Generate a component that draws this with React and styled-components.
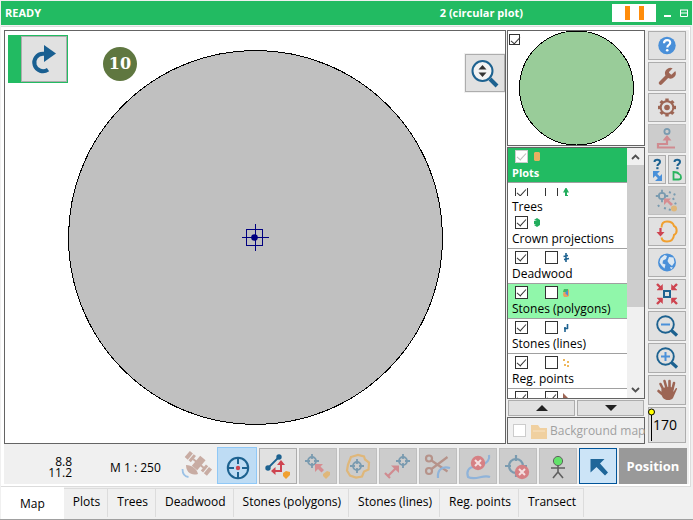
import React from "react";
import styled, { createGlobalStyle, css } from "styled-components";

const green = "#22bb62";
const navy = "#1d6290";
const brown = "#9d6554";
const red = "#ce4450";
const sky = "#4a90d9";
const amber = "#f0a030";

const GlobalStyle = createGlobalStyle`
  * { box-sizing: border-box; }
  body { margin: 0; background: #f0f0f0; }
  button, input { font: inherit; margin: 0; padding: 0; }
  svg { display: block; }
`;

const Page = styled.div`
  min-height: 100vh;
  display: flex;
  flex-direction: column;
  padding: 1px 1px 0;
  background: #f0f0f0;
  border-bottom: 1px solid #a0a0a0;
  color: #000;
  font: 12px/16px "Open Sans", "Noto Sans", sans-serif;
`;

const Header = styled.header`
  display: flex;
  align-items: center;
  height: 24px;
  padding: 0 4px;
  background: ${green};
  color: #fff;
  font-size: 11px;
  font-weight: 700;
`;
const Status = styled.span`
  flex: 1;
`;
const PlotTitle = styled.h1`
  margin: 0 89px 0 0;
  font: inherit;
`;
const Gauge = styled.span`
  display: flex;
  justify-content: center;
  gap: 9px;
  width: 44px;
  height: 18px;
  padding: 2px 0;
  background: #fff;
`;
const GaugeBar = styled.span`
  width: 5px;
  background: #ff8c0a;
`;
const WindowButton = styled.button`
  width: 8px;
  height: 8px;
  margin-left: 8px;
  border: 0;
  background: none;
`;

const Workspace = styled.main`
  flex: 1;
  margin-top: 1px;
  padding: 3px 0 0 3px;
  margin-right: 1px;
  border: 1px solid #dcdcdc;
  border-left: 0;
  background: #fff;
`;
const Panels = styled.div`
  display: flex;
  gap: 1px;
  background: #f0f0f0;
  margin-right: 1px;
`;
const MapPanel = styled.section`
  position: relative;
  flex: 1;
  min-width: 0;
  border: 1px solid #646464;
  background: #fff;
`;
const MapDrawing = styled.svg`
  width: 100%;
  height: 100%;
`;
const UndoFrame = styled.div`
  position: absolute;
  left: 3px;
  top: 4px;
  padding: 1px 1px 1px 13px;
  background: ${green};
`;
const ZoomFrame = styled.div`
  position: absolute;
  right: 0;
  top: 22px;
  padding: 1px 0 1px 1px;
  background: #f0f0f0;
`;
const Badge = styled.span`
  position: absolute;
  left: 98px;
  top: 16px;
  width: 34px;
  height: 34px;
  border-radius: 50%;
  background: #5f7740;
  color: #fff;
  font: 700 16px/34px "DejaVu Serif", serif;
  text-align: center;
`;

const tones = {
  normal: css`
    border-color: #adadad;
    background: #e1e1e1;
  `,
  off: css`
    border-color: #bfbfbf;
    background: #cccccc;
  `,
  hover: css`
    border-color: #90c8f6;
    background: #bedcf4;
  `,
  active: css`
    border-color: #005499;
    background: #cce4f7;
  `,
  flat: css`
    border-color: transparent;
    background: none;
  `,
};
const IconButton = styled.button`
  display: flex;
  align-items: center;
  justify-content: center;
  flex: none;
  width: ${(p) => p.$w || 38}px;
  height: ${(p) => p.$h || 29}px;
  border: 1px solid;
  ${(p) => tones[p.$tone || "normal"]}
`;

const SidePanel = styled.aside`
  display: flex;
  flex-direction: column;
  width: 138px;
  flex: none;
`;
const Preview = styled.div`
  position: relative;
  height: 116px;
  border: 1px solid #646464;
  background: #fff;
`;
const PreviewCheck = styled.div`
  position: absolute;
  left: 1px;
  top: 3px;
`;
const Check = styled.input.attrs({ type: "checkbox" })`
  appearance: none;
  display: block;
  flex: none;
  position: relative;
  width: ${(p) => p.$size || 13}px;
  height: ${(p) => p.$size || 13}px;
  border: 1px solid ${(p) => (p.$faint ? "#cccccc" : "#333")};
  background: #fff;
  &:checked::after {
    content: "";
    position: absolute;
    left: 3px;
    top: 0;
    width: 4px;
    height: 8px;
    border: solid ${(p) => (p.$faint ? "#bbb" : "#333")};
    border-width: 0 1px 1px 0;
    transform: rotate(42deg);
  }
`;

const LayerBox = styled.div`
  display: flex;
  height: 252px;
  margin-top: 1px;
  border: 1px solid #646464;
  background: #fff;
`;
const Layers = styled.ul`
  flex: 1;
  min-width: 0;
  margin: 0;
  padding: 0;
  list-style: none;
  overflow: hidden;
`;
const Layer = styled.li`
  height: ${(p) => (p.$cut ? 31 : 35)}px;
  padding: ${(p) => (p.$cut ? 5 : 2)}px 0 0 4px;
  border-bottom: 1px solid ${(p) => (p.$line ? "#a0a0a0" : "transparent")};
  background: ${(p) => p.$bg || "#fff"};
  background-clip: padding-box;
  color: ${(p) => (p.$bold ? "#fff" : "#000")};
  font-size: ${(p) => (p.$bold ? 11 : 12)}px;
  font-weight: ${(p) => (p.$bold ? 700 : 400)};
`;
const Toggles = styled.div`
  display: grid;
  grid-template-columns: ${(p) => (p.$single ? "17px 10px" : "30px 16px 10px")};
  align-items: center;
  align-content: center;
  height: ${(p) => (p.$cut ? 8 : 13)}px;
  margin: 0 0 ${(p) => (p.$cut ? 3 : 2)}px 3px;
  overflow: hidden;
`;
const LayerName = styled.span`
  display: block;
  white-space: nowrap;
`;
const ScrollBar = styled.div`
  display: flex;
  flex-direction: column;
  align-items: center;
  width: 17px;
  background: #f0f0f0;
`;
const ScrollButton = styled.button`
  display: grid;
  place-items: center;
  width: 17px;
  height: 17px;
  border: 0;
  background: none;
`;
const Thumb = styled.div`
  align-self: stretch;
  height: 142px;
  margin-bottom: auto;
  background: #cdcdcd;
`;
const MoveButtons = styled.div`
  display: flex;
  gap: 2px;
  margin: 1px 1px 0;
`;
const MoveButton = styled(IconButton)`
  flex: 1;
  height: 16px;
`;
const BackgroundMap = styled.label`
  display: flex;
  align-items: center;
  flex: 1;
  margin-top: 1px;
  padding-left: 5px;
  border: 1px solid #646464;
  color: #a0a0a0;
  white-space: nowrap;
`;
const FolderSlot = styled.span`
  margin: 3px 3px 0 5px;
`;

const Tools = styled.nav`
  display: flex;
  flex-direction: column;
  gap: 2px;
  width: 38px;
  margin: 1px 3px 1px 2px;
  flex: none;
`;
const Pair = styled.div`
  display: flex;
  justify-content: space-between;
`;
const ScaleButton = styled(IconButton)`
  position: relative;
  justify-content: flex-end;
  padding-right: 8px;
  font-size: 14px;
`;
const Pin = styled.svg`
  position: absolute;
  left: -1px;
  top: 0;
`;

const Bottom = styled.footer`
  display: flex;
  align-items: flex-end;
  gap: 2px;
  height: 40px;
  margin-right: 1px;
  padding-right: 2px;
  background: #f0f0f0;
`;
const Coordinates = styled.div`
  width: 68px;
  padding-bottom: 6px;
  line-height: 11px;
  text-align: right;
`;
const Scale = styled.div`
  flex: 1;
  padding: 0 0 8px 36px;
  white-space: nowrap;
`;
const Actions = styled.div`
  display: flex;
  gap: 2px;
  align-items: flex-end;
`;
const PositionButton = styled.button`
  width: 68px;
  height: 36px;
  border: 0;
  background: #999;
  color: #fff;
  font-size: 13px;
  font-weight: 700;
`;

const Tabs = styled.div`
  display: flex;
  align-items: flex-start;
`;
const Tab = styled.button`
  height: ${(p) => (p.$on ? 32 : 29)}px;
  margin-top: ${(p) => (p.$on ? 0 : 1)}px;
  padding: ${(p) => (p.$on ? "2px 19px 0" : "0 7px 2px 9px")};
  border: 0 solid #dcdcdc;
  border-width: ${(p) => (p.$on ? "0" : "1px 1px 0 0")};
  background: ${(p) => (p.$on ? "#fff" : "#f0f0f0")};
  white-space: nowrap;
`;

const Svg = ({ w = 36, h = 27, children, ...rest }) => (
  <svg width={w} height={h} viewBox={`0 0 ${w} ${h}`} fill="none" aria-hidden="true" {...rest}>
    {children}
  </svg>
);

const Help = () => (
  <Svg>
    <circle cx="18" cy="13.5" r="8.7" fill={sky} />
    <path d="M15 11.200c0-4 6.200-4 6.200-.5 0 2.300-2.900 2.300-2.900 4.800" stroke="#fff" strokeWidth="2.200" />
    <circle cx="18.200" cy="18.300" r="1.300" fill="#fff" />
  </Svg>
);
const WrenchIcon = () => (
  <Svg>
    <g transform="translate(7 3) scale(.9)">
      <path
        fill={brown}
        d="M14.700 6.300a1 1 0 0 0 0 1.400l1.600 1.600a1 1 0 0 0 1.400 0l3.770-3.770a6 6 0 0 1-7.940 7.940l-6.910 6.910a2.120 2.120 0 0 1-3-3l6.910-6.910a6 6 0 0 1 7.940-7.940z"
      />
    </g>
  </Svg>
);
const Gear = () => (
  <Svg>
    <g transform="translate(18 13.500)" stroke={brown}>
      <circle r="6.300" strokeWidth="2" />
      <circle r="2.800" fill={brown} stroke="none" />
      {[0, 45, 90, 135, 180, 225, 270, 315].map((a) => (
        <path key={a} d="M0-6.500v-2.500" strokeWidth="3.400" transform={`rotate(${a})`} />
      ))}
    </g>
  </Svg>
);
const StepUp = () => (
  <Svg>
    <circle cx="18" cy="6.500" r="2.600" stroke="#7a9bb0" strokeWidth="1.800" />
    <path d="M18 12v7H9v3.500h17" stroke="#d08b90" strokeWidth="2.200" />
    <path d="M13.500 15.500 18 10l4.500 5.500z" fill="#d08b90" />
  </Svg>
);
const QuestionMark = () => (
  <>
    <path d="M5.500 6c0-3 5.500-3 5.500 0 0 2-2.600 2-2.600 4" stroke={navy} strokeWidth="2" />
    <path d="M7.300 11.200h2.200v2H7.300z" fill={navy} />
  </>
);
const AskMove = () => (
  <Svg w={16}>
    <QuestionMark />
    <path d="M4 15h7l-7 7zM13 25H6l7-7z" fill={sky} />
    <path d="m6 17.500 5.500 5.500" stroke={sky} strokeWidth="2.500" />
  </Svg>
);
const AskShape = () => (
  <Svg w={16}>
    <QuestionMark />
    <path d="M4.500 16v7.500h5c3.500 0 3-4.500.5-5.500-1.500-2-3.500-2-5.500-2z" stroke="#2bb45f" strokeWidth="1.800" />
  </Svg>
);
const Sight = ({ x, y, r = 4, c = "#7a9bb0" }) => (
  <g transform={`translate(${x} ${y})`} stroke={c} strokeWidth="1.800">
    <circle r={r} />
    <path d={`M0-${r + 3}V-2M0 2V${r + 3}M-${r + 3} 0H-2M2 0H${r + 3}`} />
  </g>
);
const Scatter = () => (
  <Svg>
    <Sight x={13} y={9} r={3.2} />
    <path d="M20 5l9 4M24 11l4 9M9 18l3 4M15 21l7 2" stroke="#7a9bb0" strokeWidth="2" strokeDasharray="2 3" />
    <path d="M15 11.500h7l-2 2 4 3.500-2 2-4-4-3 3z" fill="#d68d91" />
    <circle cx="25" cy="21.500" r="3" fill="#dfb77a" />
  </Svg>
);
const PlotIn = () => (
  <Svg>
    <path
      d="M12.500 9.500c0-3.500 2-6 5.500-6s6 .5 7 4.500c3 1 4 7 0 9-.5 5-3.500 6.500-7 6.500-3 0-5-1-5.500-4"
      stroke={amber}
      strokeWidth="2"
    />
    <path d="M11.500 10v5" stroke={red} strokeWidth="2.200" />
    <path d="M7.500 14h8l-4 4.500z" fill={red} />
  </Svg>
);
const Globe = () => (
  <Svg>
    <circle cx="18" cy="13.500" r="9" fill={sky} />
    <path
      d="m11.500 9.500 4-3.500 2.500 1-1 3-3 1.500-.5 3 3 1-1 4-3-3-2-3zM20 8l4.500.500 1 5-2.500 3.500-3-2.500-1.500-2.500zM21 18l3 .5-2 2z"
      fill="#dce8f2"
    />
  </Svg>
);
const Collapse = () => (
  <Svg h={28}>
    <rect x="15" y="11" width="6" height="6" stroke={navy} strokeWidth="2" />
    <g fill={red} stroke={red}>
      {["", "translate(36 0) scale(-1 1)", "translate(0 28) scale(1 -1)", "translate(36 28) scale(-1 -1)"].map((t) => (
        <g key={t} transform={t || undefined}>
          <path d="M13.500 4.500v5.500H8z" strokeWidth=".5" />
          <path d="m8 4 5 5" strokeWidth="2.400" />
        </g>
      ))}
    </g>
  </Svg>
);
const Magnifier = ({ plus }) => (
  <Svg h={28}>
    <circle cx="16.500" cy="12.500" r="8.300" stroke={navy} strokeWidth="1.900" />
    <path d="m22.500 18.500 5.500 5" stroke={navy} strokeWidth="3.200" />
    <path d={plus ? "M12 12.500h9M16.500 8v9" : "M12 12.500h9"} stroke={sky} strokeWidth="2" />
  </Svg>
);
const Hand = () => (
  <Svg h={28}>
    <g stroke={brown} strokeLinecap="round" strokeWidth="2.600">
      <path d="m14.500 14-3-6M17.500 12l-2-7M20.500 12V5M23.500 13l1.500-6M13 18l-3.500-3" />
    </g>
    <path d="M12.500 13c2-2 9-3 12-1v4l2-3.500c1-1 2-.5 1.500.500L24 22c-2 3-8 2.500-10 0-1.500-2-2-5-1.500-9z" fill={brown} />
  </Svg>
);

const Satellite = () => (
  <Svg h={34}>
    <g transform="translate(20 14) rotate(40)" fill="#c8aca3">
      <path d="M-14-4h4v8h-4zM-9-4h3v8h-3zM7-4h3v8H7zM11-4h4v8h-4zM-6-1H7v2H-6z" />
      <path d="M-3-7h7V6h-7z" />
    </g>
    <path d="M8 16c0 7 5 11 12 9-1-5-6-9-12-9z" fill="#c8aca3" />
    <path d="M4.500 20c0 5 2 7.500 6 8" stroke="#9cc2e6" strokeWidth="1.800" />
  </Svg>
);
const Target = () => (
  <Svg h={34} w={38}>
    <g stroke={navy} strokeWidth="2">
      <circle cx="20" cy="19" r="10.200" />
      <path d="M20 9v6M20 23v6M10 19h6M24 19h6" />
    </g>
    <circle cx="20" cy="19" r="2.200" fill={red} />
  </Svg>
);
const MoveLine = () => (
  <Svg h={34}>
    <path d="M8 19 19 8" stroke={navy} strokeWidth="1.800" />
    <circle cx="8" cy="19" r="2.700" fill={navy} />
    <circle cx="19" cy="8" r="2.700" fill={navy} />
    <path d="M21 14v8h-7" stroke={red} strokeWidth="2" />
    <path d="m17 16 4-5 4 5zM15.500 18v8L11 22z" fill={red} />
    <path d="m23 24 3-2 4 1v3l-4 4-3-3z" fill={amber} />
  </Svg>
);
const PointFrom = () => (
  <Svg h={34}>
    <Sight x={12} y={12} />
    <path d="M15 15h8l-2.500 2.500 3.500 3.500-2.500 2.500-3.500-3.500L15 23z" fill="#d68d91" />
    <path d="m23 25 4-3 3 1v3l-4 4-3-3z" fill="#dfb77a" />
  </Svg>
);
const PlotCentre = () => (
  <Svg h={34}>
    <path d="M11 8l7-2 6 1.500 1 3 4 3-.5 7-4.500 2-2 5-6 1-6-2-3-5 1-6z" stroke="#dfb77a" strokeWidth="2.200" />
    <Sight x={17} y={17} />
  </Svg>
);
const PointTo = () => (
  <Svg h={34}>
    <Sight x={23} y={12} />
    <path d="m8 27 8-8M5 24l5 5" stroke="#d08b90" strokeWidth="2.200" />
    <path d="M11 16.500h8V24z" fill="#d08b90" />
  </Svg>
);
const Scissors = () => (
  <Svg h={34}>
    <g stroke="#b6938a" strokeWidth="2.200">
      <circle cx="9" cy="9.500" r="3" />
      <circle cx="9" cy="22" r="3" />
      <path d="m11.500 11.500 16 11M11.500 20l16-12" />
    </g>
    <path d="M18 29c-1-9 5-12 12-10" stroke="#8fb3d9" strokeWidth="2.200" />
  </Svg>
);
const Cross = ({ x, y }) => (
  <g transform={`translate(${x} ${y})`}>
    <circle r="7.200" fill="#d68084" />
    <path d="m-3-3 6 6m0-6-6 6" stroke="#fff" strokeOpacity=".75" strokeWidth="2" />
  </g>
);
const RemoveLine = () => (
  <Svg h={34}>
    <path d="M29 6c1 5-2 7-5 9s-5 3-10 3-8 4-6 10c8 4 15-3 22 0" stroke="#8fb3d9" strokeWidth="2.200" />
    <Cross x={18} y={14} />
  </Svg>
);
const RemovePoint = () => (
  <Svg h={34}>
    <g stroke="#7a9bb0" strokeWidth="2.200">
      <circle cx="16" cy="17" r="7" />
      <path d="M16 6v6M5 17h6M16 22v6M21 17h6" />
    </g>
    <Cross x={22} y={23} />
  </Svg>
);
const Person = () => (
  <Svg h={34}>
    <path d="M18 16v8M11 19h14M18 23l-5 6M18 23l5 6" stroke="#606060" strokeWidth="1.600" />
    <circle cx="18" cy="12" r="4.600" fill="#62e26a" stroke="#606060" />
  </Svg>
);
const Pointer = () => (
  <Svg h={34}>
    <path d="M10.500 10h14l-4.500 4.500 8 9-3 3-8.500-8.500-6 5.500z" fill="#1f6699" />
  </Svg>
);
const Redo = () => (
  <Svg w={30} h={34}>
    <path d="M16 11.800h-2a8.700 8.700 0 1 0 5 15.800" stroke="#195f91" strokeWidth="4" />
    <path d="M15 3v17l12-8.500z" fill="#195f91" />
  </Svg>
);
const FitIcon = () => (
  <Svg w={32} h={34}>
    <circle cx="13.500" cy="15" r="10" fill="#f3f3f3" stroke={navy} strokeWidth="2" />
    <path d="m21 23 7 7" stroke={navy} strokeWidth="4" />
    <path d="M9.500 13.500h8l-4-4.500zM9.500 16.500h8l-4 4.500z" fill="#333" />
  </Svg>
);
const Folder = () => (
  <Svg w={16} h={14}>
    <path d="M0 0h7l2 3h7v11H0z" fill="#f0d0a0" />
    <path d="M2 6h12" stroke="#f8e3c5" />
  </Svg>
);
const glyphs = {
  plot: <path d="M3 0h4l1 1v7L7 9H3L2 8V1z" fill="#e8af60" />,
  tree: <path d="m5 0 3 5.500H6V8h1v1H4V8V5.500H2z" fill="#22ad5d" />,
  crown: <path d="m2 2 3-2 3 2v5L5 9 2 7l2-1H2V3h3z" fill="#22ad5d" />,
  deadwood: <path d="M5 0v9M2.500 3.500 7 2.500M3 6.500l5-1" stroke={navy} strokeWidth="1.600" />,
  polygon: (
    <>
      <path d="M3 1h4l1 1v6L6 9H3L2 7z" fill="#e8a05e" />
      <path d="M3 1h4v3H2z" fill="#40b864" />
      <path d="m7 2-3 3 3 3z" fill={sky} />
    </>
  ),
  line: <path d="M4 4v5M6.500 1v5M3 5.500h4" stroke={navy} strokeWidth="1.600" />,
  points: <path d="M2 1h2v2H2zM6 3h2v2H6zM3 6h2v2H3zM6 7h2v2H6z" fill="#eeb85c" />,
  area: <path d="m2 0 5 5v4H2z" fill={brown} />,
};

const layers = [
  { name: "Plots", icon: "plot", bg: green, bold: true, single: true, line: true, faint: true },
  { name: "Trees", icon: "tree", cut: true },
  { name: "Crown projections", icon: "crown", single: true, line: true },
  { name: "Deadwood", icon: "deadwood", line: true },
  { name: "Stones (polygons)", icon: "polygon", line: true, bg: "#90f7aa" },
  { name: "Stones (lines)", icon: "line", line: true },
  { name: "Reg. points", icon: "points", line: true },
  { name: "", icon: "area", second: true },
];

const actions = [
  ["GPS", Satellite, "flat"],
  ["Target", Target, "hover"],
  ["Move line", MoveLine, "normal"],
  ["Point from plot", PointFrom, "off"],
  ["Plot centre", PlotCentre, "off"],
  ["Point to", PointTo, "off"],
  ["Cut", Scissors, "off"],
  ["Remove line", RemoveLine, "off"],
  ["Remove point", RemovePoint, "off"],
  ["Person", Person, "off"],
  ["Select", Pointer, "active"],
];

const Tool = ({ label, icon: Icon, ...rest }) => (
  <IconButton type="button" aria-label={label} {...rest}>
    <Icon />
  </IconButton>
);

export default function App() {
  return (
    <Page>
      <GlobalStyle />
      <Header>
        <Status>READY</Status>
        <PlotTitle>2 (circular plot)</PlotTitle>
        <Gauge>
          <GaugeBar />
          <GaugeBar />
        </Gauge>
        <WindowButton aria-label="Minimize">
          <Svg w={8} h={8}>
            <path d="M0 6h7v2H0z" fill="#fff" />
          </Svg>
        </WindowButton>
        <WindowButton aria-label="Restore">
          <Svg w={8} h={8}>
            <path d="M.5 1v6.500h7V1M0 1h8M0 4h8" stroke="#fff" />
          </Svg>
        </WindowButton>
      </Header>

      <Workspace>
        <Panels>
          <MapPanel>
            <MapDrawing viewBox="0 0 500 412" preserveAspectRatio="xMidYMid meet">
              <circle cx="250.500" cy="206.500" r="187" fill="#c0c0c0" stroke="#000" shapeRendering="crispEdges" />
              <g stroke="#000080" shapeRendering="crispEdges" fill="none">
                <rect x="241.500" y="198.500" width="16" height="16" />
                <path d="M237 206.500h27M250.500 193v27" />
              </g>
              <circle cx="249.500" cy="206.500" r="3.300" fill="#000080" />
            </MapDrawing>
            <UndoFrame>
              <Tool label="Redo" icon={Redo} $w={46} $h={46} />
            </UndoFrame>
            <Badge>10</Badge>
            <ZoomFrame>
              <Tool label="Zoom to fit" icon={FitIcon} $w={40} $h={38} />
            </ZoomFrame>
          </MapPanel>

          <SidePanel>
            <Preview>
              <Svg w={136} h={114}>
                <circle cx="68.500" cy="57" r="57" fill="#99cc99" stroke="#000" shapeRendering="crispEdges" />
              </Svg>
              <PreviewCheck>
                <Check $size={11} defaultChecked aria-label="Preview" />
              </PreviewCheck>
            </Preview>
            <LayerBox>
              <Layers>
                {layers.map((l) => (
                  <Layer key={l.icon} $bg={l.bg} $bold={l.bold} $line={l.line} $cut={l.cut}>
                    <Toggles $single={l.single} $cut={l.cut}>
                      <Check defaultChecked $faint={l.faint} aria-label={`${l.name || l.icon} visible`} />
                      {!l.single && <Check defaultChecked={l.second} aria-label={`${l.name || l.icon} labels`} />}
                      <Svg w={10} h={10}>
                        {glyphs[l.icon]}
                      </Svg>
                    </Toggles>
                    <LayerName>{l.name}</LayerName>
                  </Layer>
                ))}
              </Layers>
              <ScrollBar>
                <ScrollButton aria-label="Scroll up">
                  <Svg w={9} h={6}>
                    <path d="m1 5 3.500-3.500L8 5" stroke="#505050" strokeWidth="1.800" />
                  </Svg>
                </ScrollButton>
                <Thumb />
                <ScrollButton aria-label="Scroll down">
                  <Svg w={9} h={6}>
                    <path d="m1 1 3.500 3.500L8 1" stroke="#505050" strokeWidth="1.800" />
                  </Svg>
                </ScrollButton>
              </ScrollBar>
            </LayerBox>
            <MoveButtons>
              <MoveButton aria-label="Move up">
                <Svg w={12} h={6}>
                  <path d="m0 6 6-6 6 6z" fill="#222" />
                </Svg>
              </MoveButton>
              <MoveButton aria-label="Move down">
                <Svg w={12} h={6}>
                  <path d="m0 0 6 6 6-6z" fill="#222" />
                </Svg>
              </MoveButton>
            </MoveButtons>
            <BackgroundMap>
              <Check $faint disabled />
              <FolderSlot>
                <Folder />
              </FolderSlot>
              Background map
            </BackgroundMap>
          </SidePanel>

          <Tools>
            <Tool label="Help" icon={Help} />
            <Tool label="Settings" icon={WrenchIcon} />
            <Tool label="Options" icon={Gear} />
            <Tool label="Step up" icon={StepUp} $tone="off" />
            <Pair>
              <Tool label="Query position" icon={AskMove} $w={18} />
              <Tool label="Query shape" icon={AskShape} $w={18} />
            </Pair>
            <Tool label="Scatter" icon={Scatter} $tone="off" />
            <Tool label="Go to plot" icon={PlotIn} />
            <Tool label="Whole world" icon={Globe} />
            <Tool label="Centre" icon={Collapse} $h={30} />
            <Tool label="Zoom out" icon={Magnifier} $h={30} />
            <IconButton type="button" aria-label="Zoom in" $h={30}>
              <Magnifier plus />
            </IconButton>
            <Tool label="Pan" icon={Hand} $h={30} />
            <ScaleButton $h={36}>
              <Pin width="8" height="34" viewBox="0 0 8 34" aria-hidden="true">
                <path d="M3.500 6v27" stroke="#000" />
                <circle cx="3.500" cy="4" r="3" fill="#ff0" stroke="#000" />
              </Pin>
              170
            </ScaleButton>
          </Tools>
        </Panels>

        <Bottom>
          <Coordinates>
            8.8
            <br />
            11.2
          </Coordinates>
          <Scale>M 1 : 250</Scale>
          <Actions>
            {actions.map(([label, icon, tone]) => (
              <Tool
                key={label}
                label={label}
                icon={icon}
                $tone={tone}
                $w={tone === "hover" ? 40 : 38}
                $h={tone === "hover" ? 37 : 36}
              />
            ))}
            <PositionButton>Position</PositionButton>
          </Actions>
        </Bottom>
      </Workspace>

      <Tabs role="tablist">
        <Tab role="tab" aria-selected="true" $on>
          Map
        </Tab>
        {["Plots", "Trees", "Deadwood", "Stones (polygons)", "Stones (lines)", "Reg. points", "Transect"].map((t) => (
          <Tab key={t} role="tab" aria-selected="false">
            {t}
          </Tab>
        ))}
      </Tabs>
    </Page>
  );
}
